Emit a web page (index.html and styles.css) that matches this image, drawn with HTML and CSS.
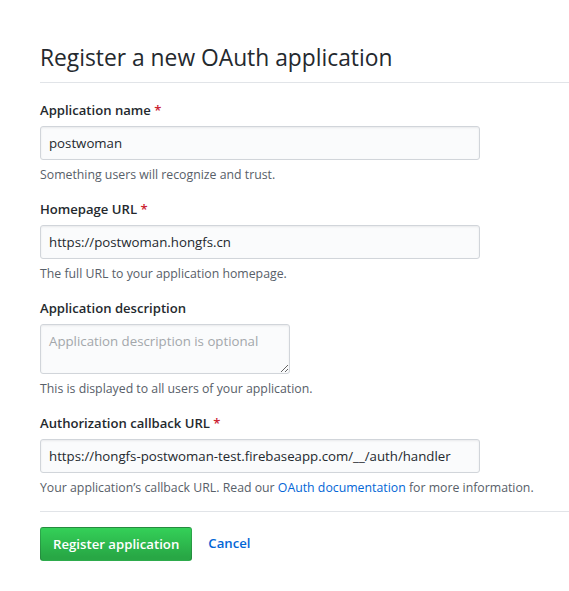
FILE: index.html
```html
<!DOCTYPE html>
<html lang="en">
<head>
<meta charset="utf-8">
<title>Register a new OAuth application</title>
<link rel="stylesheet" href="styles.css">
</head>
<body>
<div class="page">
  <div class="subhead">
    <h2 class="subhead-heading">Register a new OAuth application</h2>
  </div>
  <form class="form">
    <div class="form-group">
      <label class="label">Application name <span class="req">*</span></label>
      <input class="input" type="text" value="postwoman">
      <p class="note">Something users will recognize and trust.</p>
    </div>
    <div class="form-group">
      <label class="label">Homepage URL <span class="req">*</span></label>
      <input class="input" type="text" value="https://postwoman.hongfs.cn">
      <p class="note">The full URL to your application homepage.</p>
    </div>
    <div class="form-group">
      <label class="label">Application description</label>
      <textarea class="textarea" placeholder="Application description is optional"></textarea>
      <p class="note">This is displayed to all users of your application.</p>
    </div>
    <div class="form-group">
      <label class="label">Authorization callback URL <span class="req">*</span></label>
      <input class="input" type="text" value="https://hongfs-postwoman-test.firebaseapp.com/__/auth/handler">
      <p class="note">Your application’s callback URL. Read our <a class="link" href="#">OAuth documentation</a> for more information.</p>
    </div>
    <div class="actions">
      <button class="btn-primary" type="button">Register application</button>
      <a class="btn-link" href="#">Cancel</a>
    </div>
  </form>
</div>
</body>
</html>
```
FILE: styles.css
```css
* { box-sizing: border-box; }
html, body { margin: 0; padding: 0; background: #fff; }
body {
  font-family: "Open Sans", "Noto Sans", "Liberation Sans", sans-serif;
  font-size: 14px;
  line-height: 1.5;
  color: #24292e;
  overflow: hidden;
}
.page {
  padding: 39px 0 0 40px;
  width: 569px;
}
.subhead {
  border-bottom: 1px solid #e1e4e8;
  padding-top: 1px;
  padding-bottom: 6px;
  margin-bottom: 16px;
}
.subhead-heading {
  margin: 0;
  font-size: 22.8px;
  font-weight: 400;
  line-height: 36px;
  color: #24292e;
}
.form-group { margin: 0 0 14px; }
.label {
  display: block;
  font-size: 13.1px;
  font-weight: 600;
  line-height: 21px;
  height: 22px;
  padding-top: 1px;
  margin-bottom: 5px;
}
.req { color: #cb2431; }
.input, .textarea {
  display: block;
  font-family: inherit;
  font-size: 13.25px;
  color: #24292e;
  background: #fafbfc;
  border: 1px solid #d1d5da;
  border-radius: 3px;
  box-shadow: inset 0 1px 2px rgba(27,31,35,.075);
  padding: 6px 8px;
  margin: 0;
  outline: none;
}
.input {
  width: 440px;
  height: 34px;
  line-height: 20px;
}
.textarea {
  width: 250px;
  height: 50px;
  line-height: 20px;
  resize: both;
  vertical-align: top;
}
.textarea::placeholder { color: #a3a7ab; }
.note {
  margin: 6px 0 0;
  font-size: 12.3px;
  line-height: 18px;
  height: 18px;
  color: #586069;
}
.link { color: #0366d6; text-decoration: none; }
.actions {
  border-top: 1px solid #e1e4e8;
  margin-top: 13px;
  padding-top: 15px;
  display: flex;
  align-items: center;
  gap: 16px;
}
.form-group:last-of-type { margin-bottom: 0; }
.btn-primary {
  font-family: inherit;
  font-size: 13.2px;
  font-weight: 600;
  line-height: 20px;
  color: #fff;
  height: 34px;
  padding: 6px 12px;
  border: 1px solid rgba(27,31,35,.2);
  border-radius: 3px;
  background-image: linear-gradient(-180deg, #34d058 0%, #28a745 90%);
  cursor: pointer;
}
.btn-link {
  color: #0366d6;
  font-size: 13.2px;
  font-weight: 600;
  text-decoration: none;
}
```
